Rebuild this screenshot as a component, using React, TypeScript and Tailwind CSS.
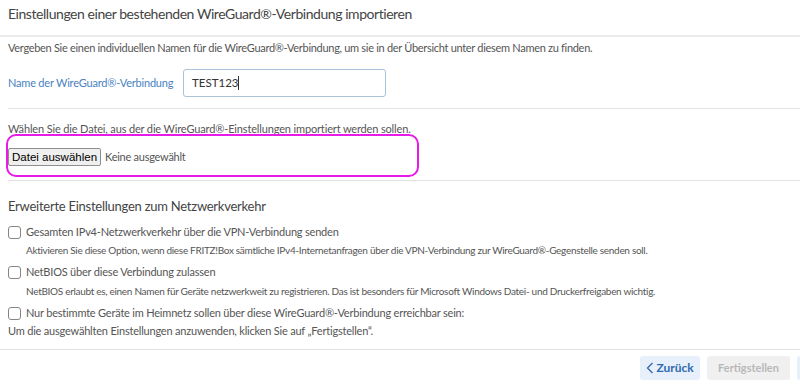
import React from "react";

const font = { fontFamily: "Lato, 'Noto Sans', sans-serif" };

const Check: React.FC<{ label: string }> = ({ label }) => (
  <div className="flex items-center h-4">
    <span className="w-[13px] h-[13px] rounded-[3px] border border-[#858585] bg-white shrink-0" />
    <span className="ml-[5px] text-[11px] tracking-[-0.2px] leading-4 text-[#555] whitespace-nowrap">{label}</span>
  </div>
);

export default function App() {
  return (
    <div className="w-[800px] h-[390px] bg-white overflow-hidden relative" style={font}>
      {/* title */}
      <div className="h-[37px] pt-[5px] pl-2 text-[14px] tracking-[-0.45px] leading-[18px] text-[#444] border-b-2 border-[#ebebeb]">
        Einstellungen einer bestehenden WireGuard®-Verbindung importieren
      </div>

      <div className="pl-2">
        <p className="mt-[3px] h-4 leading-4 text-[11px] tracking-[-0.3px] text-[#555] whitespace-nowrap">
          Vergeben Sie einen individuellen Namen für die WireGuard®-Verbindung, um sie in der Übersicht unter diesem Namen zu finden.
        </p>
        <div className="mt-[13px] flex items-center h-[28px]">
          <label className="w-[175px] text-[11px] tracking-[-0.2px] text-[#4a82c0] whitespace-nowrap">Name der WireGuard®-Verbindung</label>
          <div className="w-[203px] h-[28px] border border-[#a9c3da] rounded-[3px] flex items-center pl-2 text-[11.5px] text-[#333]">
            TEST123<span className="w-px h-[14px] bg-[#333]" />
          </div>
        </div>
        <div className="mt-[11px] border-t border-[#e2e2e2]" />

        <p className="mt-[12px] h-4 leading-4 text-[11px] tracking-[-0.15px] text-[#555] whitespace-nowrap">
          Wählen Sie die Datei, aus der die WireGuard®-Einstellungen importiert werden sollen.
        </p>
        <div className="mt-[11px] h-[18px] flex items-center">
          <button
            className="h-[18px] px-[3px] text-[11.5px] leading-[16px] text-black bg-[#efefef] border border-[#8f8f8f] rounded-[2px]"
            style={{ fontFamily: "'Liberation Sans', Arial, sans-serif" }}
          >
            Datei auswählen
          </button>
          <span className="ml-[4px] text-[11px] tracking-[-0.25px] text-[#555]">Keine ausgewählt</span>
        </div>
        <div className="mt-[14px] border-t border-[#e2e2e2]" />

        <h3 className="mt-[16px] h-[18px] leading-[18px] text-[13px] tracking-[-0.25px] text-[#444]">
          Erweiterte Einstellungen zum Netzwerkverkehr
        </h3>
        <div className="mt-[9px]">
          <Check label="Gesamten IPv4-Netzwerkverkehr über die VPN-Verbindung senden" />
        </div>
        <p className="mt-[2px] h-4 leading-4 pl-[18px] text-[10px] tracking-[-0.3px] text-[#555] whitespace-nowrap">
          Aktivieren Sie diese Option, wenn diese FRITZ!Box sämtliche IPv4-Internetanfragen über die VPN-Verbindung zur WireGuard®-Gegenstelle senden soll.
        </p>
        <div className="mt-[6px]">
          <Check label="NetBIOS über diese Verbindung zulassen" />
        </div>
        <p className="mt-[3px] h-4 leading-4 pl-[18px] text-[10px] tracking-[-0.3px] text-[#555] whitespace-nowrap">
          NetBIOS erlaubt es, einen Namen für Geräte netzwerkweit zu registrieren. Das ist besonders für Microsoft Windows Datei- und Druckerfreigaben wichtig.
        </p>
        <div className="mt-[6px]">
          <Check label="Nur bestimmte Geräte im Heimnetz sollen über diese WireGuard®-Verbindung erreichbar sein:" />
        </div>
        <p className="mt-[2px] h-4 leading-4 text-[11px] tracking-[-0.2px] text-[#555] whitespace-nowrap">
          Um die ausgewählten Einstellungen anzuwenden, klicken Sie auf „Fertigstellen“.
        </p>
      </div>

      <div className="mt-[10px] border-t border-[#e2e2e2]" />
      <div className="mt-[6px] flex justify-end gap-[7px]">
        <button className="w-[60px] h-[24px] rounded-[3px] bg-[#e6effa] text-[#2f6aad] text-[12px] font-bold flex items-center justify-center">
          <svg width="8" height="12" viewBox="0 0 8 12" className="mr-[2px]">
            <path d="M6.5 1 L1.5 6 L6.5 11" fill="none" stroke="#2f6aad" strokeWidth="1.3" />
          </svg>
          Zurück
        </button>
        <button className="w-[83px] h-[24px] rounded-[3px] bg-[#f0f0f0] text-[#b9b9b9] text-[11px] font-bold">
          Fertigstellen
        </button>
        <button className="w-[80px] h-[24px] rounded-[3px] bg-[#e6effa] -mr-[77px]" />
      </div>

      {/* annotation */}
      <div className="absolute left-[6px] top-[134px] w-[413px] h-[43px] border-2 border-[#e81ae8] rounded-[10px] pointer-events-none" />
    </div>
  );
}
